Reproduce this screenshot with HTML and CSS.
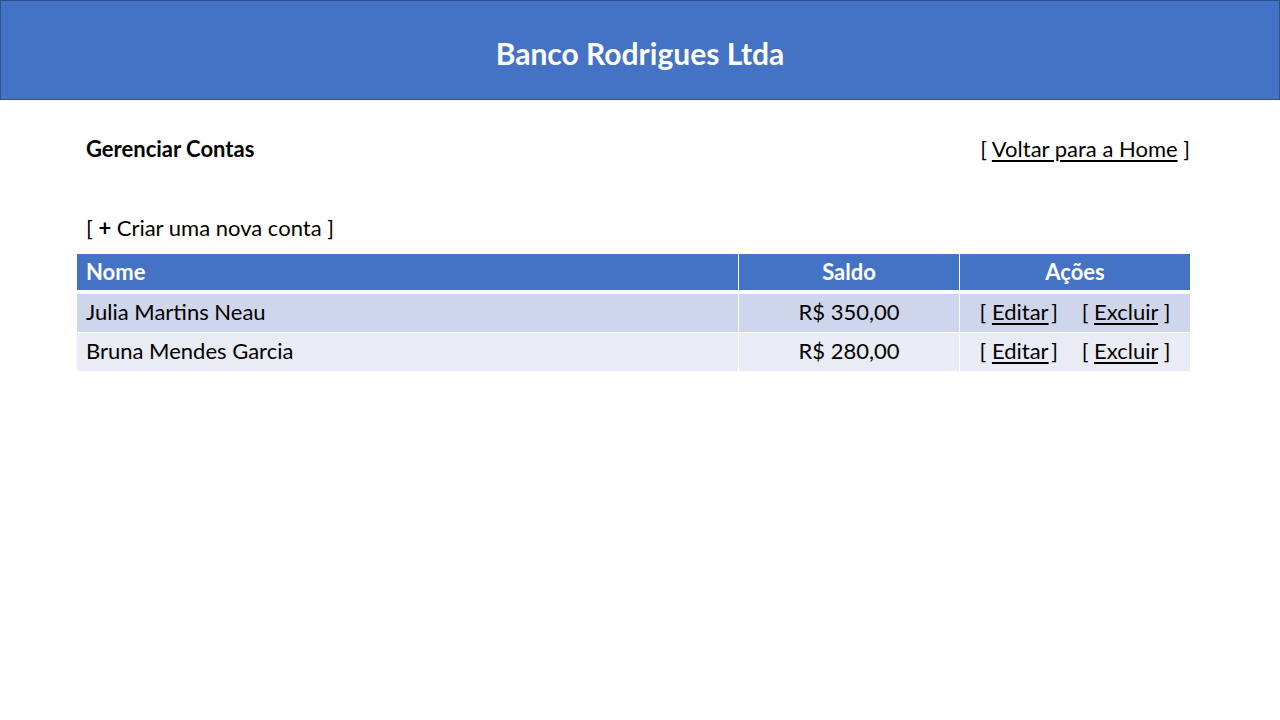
FILE: index.html
```html
<!DOCTYPE html>
<html lang="pt-BR">
<head>
  <meta charset="UTF-8" />
  <meta name="viewport" content="width=device-width, initial-scale=1" />
  <title>Banco Rodrigues Ltda - Gerenciar Contas</title>
  <link rel="stylesheet" href="styles.css">
</head>
<body>
<header class="topo">
  <h1>Banco Rodrigues Ltda</h1>
</header>
<main class="conteudo">
  <div class="barra">
    <h2>Gerenciar Contas</h2>
    <span class="link-acao">[ <a href="#">Voltar para a Home</a> ]</span>
  </div>
  <div class="nova-conta">[ <b>+</b> Criar uma nova conta ]</div>
  <table class="contas">
    <thead>
      <tr>
        <th class="col-nome">Nome</th>
        <th class="col-saldo">Saldo</th>
        <th class="col-acoes">Ações</th>
      </tr>
    </thead>
    <tbody>
      <tr>
        <td>Julia Martins Neau</td>
        <td class="centro">R$ 350,00</td>
        <td class="centro acoes">
          <span>[ <a href="#">Editar</a>&thinsp;]</span>
          <span>[ <a href="#">Excluir</a> ]</span>
        </td>
      </tr>
      <tr>
        <td>Bruna Mendes Garcia</td>
        <td class="centro">R$ 280,00</td>
        <td class="centro acoes">
          <span>[ <a href="#">Editar</a>&thinsp;]</span>
          <span>[ <a href="#">Excluir</a> ]</span>
        </td>
      </tr>
    </tbody>
  </table>
</main>
</body>
</html>
```

FILE: styles.css
```css
body {
  margin: 0;
  font-family: Lato, "Open Sans", sans-serif;
  color: #000;
  background: #fff;
}
.topo {
  height: 98px;
  background: #4472c4;
  border: 1px solid #2f528f;
  display: flex;
  align-items: center;
  justify-content: center;
}
.topo h1 {
  margin: 6px 0 0 0;
  color: #fff;
  font-size: 30px;
  font-weight: bold;
}
.conteudo {
  width: 1113px;
  margin: 0 90px 0 77px;
  padding-top: 35px;
}
.barra {
  display: flex;
  justify-content: space-between;
  align-items: center;
  padding-left: 9px;
  height: 26px;
  font-size: 22px;
}
.barra h2 {
  margin: 0;
  font-size: 22px;
  font-weight: bold;
}
a {
  color: #000;
  text-decoration: underline;
  text-underline-offset: 3px;
}
.nova-conta {
  margin-top: 54px;
  padding-left: 9px;
  font-size: 22px;
  line-height: 26px;
}
.contas {
  width: 1115px;
  margin: 13px 0 0 -1px;
  border-collapse: collapse;
  font-size: 22px;
}
.contas th,
.contas td {
  border: 1px solid #fff;
  height: 35px;
  padding: 0 9px 3px 9px;
}
.contas th {
  height: 34px;
  padding-bottom: 2px;
  background: #4472c4;
  color: #fff;
  font-weight: bold;
  border-top: none;
  border-bottom: 4px solid #fff;
}
.col-nome {
  width: 643px;
  text-align: left;
}
.col-saldo {
  width: 202px;
  text-align: center;
}
.col-acoes {
  text-align: center;
}
.contas tbody tr:nth-child(odd) td {
  background: #cfd5ea;
}
.contas tbody tr:nth-child(even) td {
  background: #e9ebf5;
}
.centro {
  text-align: center;
}
.acoes span + span {
  margin-left: 18px;
}
```
